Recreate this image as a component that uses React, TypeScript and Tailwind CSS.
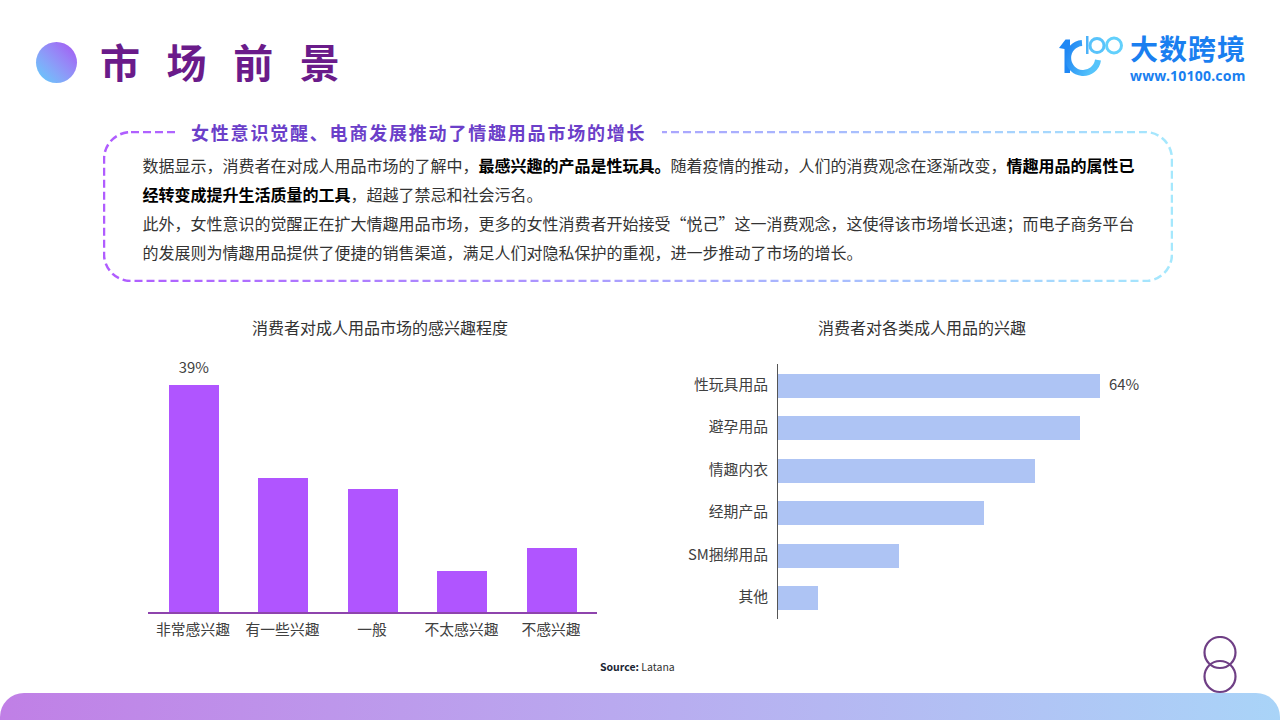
const columnData = [
  { label: '非常感兴趣', height: 227, note: '39%' },
  { label: '有一些兴趣', height: 134 },
  { label: '一般', height: 123 },
  { label: '不太感兴趣', height: 41 },
  { label: '不感兴趣', height: 64 },
];

const rowData = [
  { label: '性玩具用品', width: 322, note: '64%' },
  { label: '避孕用品', width: 302 },
  { label: '情趣内衣', width: 257 },
  { label: '经期产品', width: 206 },
  { label: 'SM捆绑用品', width: 121 },
  { label: '其他', width: 40 },
];

function Logo() {
  return (
    <div className="flex items-start gap-[1px]">
      <svg width="70" height="48" viewBox="0 0 70 48" className="mt-[4px]">
        <defs>
          <linearGradient id="arc" x1="0" y1="0" x2="1" y2="0.4">
            <stop offset="0" stopColor="#1e84f3" />
            <stop offset="1" stopColor="#55c4fb" />
          </linearGradient>
        </defs>
        <path d="M0 13 L6.5 4.5 L11 4.5 L11 38 L5.5 38 L5.5 14 Z" fill="#1f88f5" />
        <path d="M23 8 A15 15 0 1 0 39 25" fill="none" stroke="url(#arc)" strokeWidth="6" />
        <path d="M27 1 L29.5 1 L29.5 19 L27 19 Z" fill="#4db2f8" />
        <circle cx="38" cy="10.5" r="7" fill="none" stroke="#58c3fb" strokeWidth="3" />
        <circle cx="55" cy="10.5" r="7.5" fill="none" stroke="#62d0fc" strokeWidth="3" />
      </svg>
      <div className="flex flex-col">
        <span className="mt-[2px] text-[28px] leading-[30px] font-bold tracking-[1px] text-[#1a7ff0]">大数跨境</span>
        <span className="mt-[5px] text-[14px] leading-[16px] font-bold tracking-[0.2px] text-[#1a7ff0] font-['Noto_Sans',sans-serif]">www.10100.com</span>
      </div>
    </div>
  );
}

function Callout() {
  return (
    <div className="relative mx-[103px] flex h-[151px] w-[1070px] flex-col">
      <svg width="1070" height="151" viewBox="0 0 1070 151" className="absolute left-0 top-0">
        <defs>
          <linearGradient id="dash" x1="0" y1="0" x2="1" y2="0">
            <stop offset="0" stopColor="#b05cff" />
            <stop offset="1" stopColor="#a5e8fd" />
          </linearGradient>
        </defs>
        <rect x="1" y="1" width="1068" height="149" rx="27" fill="none" stroke="url(#dash)" strokeWidth="2.5" strokeDasharray="8 4" />
      </svg>
      <h2 className="relative -mt-[12px] ml-[75px] self-start bg-white pl-[13px] pr-[16px] text-[18px] leading-[26px] font-bold tracking-[1.8px] text-[#6b3fc9]">
        女性意识觉醒、电商发展推动了情趣用品市场的增长
      </h2>
      <div className="relative mt-[6px] ml-[39.5px] w-[1000px] text-[16px] leading-[29px] text-[#333333]">
        <p>
          数据显示，消费者在对成人用品市场的了解中，<b className="text-black">最感兴趣的产品是性玩具。</b>随着疫情的推动，人们的消费观念在逐渐改变，<b className="text-black">情趣用品的属性已经转变成提升生活质量的工具</b>，超越了禁忌和社会污名。
        </p>
        <p>
          此外，女性意识的觉醒正在扩大情趣用品市场，更多的女性消费者开始接受“悦己”这一消费观念，这使得该市场增长迅速；而电子商务平台的发展则为情趣用品提供了便捷的销售渠道，满足人们对隐私保护的重视，进一步推动了市场的增长。
        </p>
      </div>
    </div>
  );
}

function ColumnChart() {
  return (
    <div className="flex w-[449px] flex-col">
      <h3 className="ml-[15px] text-center text-[16px] leading-[20px] text-[#333333]">消费者对成人用品市场的感兴趣程度</h3>
      <div className="mt-[20px] flex h-[257px] items-end justify-between border-b-2 border-[#8e44ad] pl-[20.9px] pr-[20.1px]">
        {columnData.map((d) => (
          <div key={d.label} className="flex w-[50px] flex-col items-center">
            {d.note && <span className="mb-[8px] text-[14.8px] leading-[20px] text-[#404040]">{d.note}</span>}
            <div className="w-full bg-[#b055ff]" style={{ height: d.height }} />
          </div>
        ))}
      </div>
      <div className="mt-[5px] flex justify-between pl-[8px] pr-[9px] text-[14.8px] leading-[20px] text-[#404040]">
        {columnData.map((d) => (
          <span key={d.label} className="w-[74px] whitespace-nowrap text-center">{d.label}</span>
        ))}
      </div>
    </div>
  );
}

function BarChart() {
  return (
    <div className="flex w-[480px] flex-col">
      <h3 className="ml-[10px] text-center text-[16px] leading-[20px] text-[#333333]">消费者对各类成人用品的兴趣</h3>
      <div className="mt-[27px] flex">
        <div className="flex w-[100px] flex-col pt-[8px]">
          {rowData.map((d) => (
            <span key={d.label} className="flex h-[42.4px] items-start justify-end pr-[9px] text-[14.8px] leading-[24px] text-[#404040]">{d.label}</span>
          ))}
        </div>
        <div className="flex h-[255px] flex-col gap-[18.4px] border-l border-[#555555] pt-[10px]">
          {rowData.map((d) => (
            <div key={d.label} className="flex h-[24px] items-center">
              <div className="h-full bg-[#aec4f4]" style={{ width: d.width }} />
              {d.note && <span className="mb-[4px] ml-[9px] text-[14.8px] leading-[20px] text-[#404040]">{d.note}</span>}
            </div>
          ))}
        </div>
      </div>
    </div>
  );
}

export default function App() {
  return (
    <div className="relative flex h-[720px] w-[1280px] flex-col overflow-hidden bg-white font-['Noto_Sans_CJK_SC','Noto_Sans',sans-serif]">
      <header className="flex h-[131px] items-start justify-between pr-[34px]">
        <div className="ml-[36px] mt-[37.5px] flex items-center">
          <div className="h-[41px] w-[41px] rounded-full bg-gradient-to-bl from-[#a44ff2] to-[#56cffb]" />
          <h1 className="mb-[4px] ml-[23px] text-[40px] leading-[46px] font-bold tracking-[26.6px] text-[#6a1b8a]">市场前景</h1>
        </div>
        <div className="mt-[31px]">
          <Logo />
        </div>
      </header>

      <Callout />

      <main className="mt-[35px] flex pl-[148px]">
        <ColumnChart />
        <div className="ml-[80px]">
          <BarChart />
        </div>
      </main>

      <p className="mt-[20px] ml-[600px] text-[10.5px] leading-[16px] text-[#333333]">
        <b className="text-[#1a2433]">Source:</b> Latana
      </p>

      <svg width="36" height="58" viewBox="0 0 36 58" className="absolute left-[1202px] top-[636px]">
        <circle cx="18" cy="16.5" r="15.5" fill="none" stroke="#6f3f85" strokeWidth="2.2" />
        <circle cx="18" cy="40.5" r="15.5" fill="none" stroke="#6f3f85" strokeWidth="2.2" />
      </svg>

      <footer className="absolute bottom-0 left-0 h-[27px] w-full rounded-t-[24px] bg-gradient-to-r from-[#c07fe6] to-[#a9d4f8]" />
    </div>
  );
}
